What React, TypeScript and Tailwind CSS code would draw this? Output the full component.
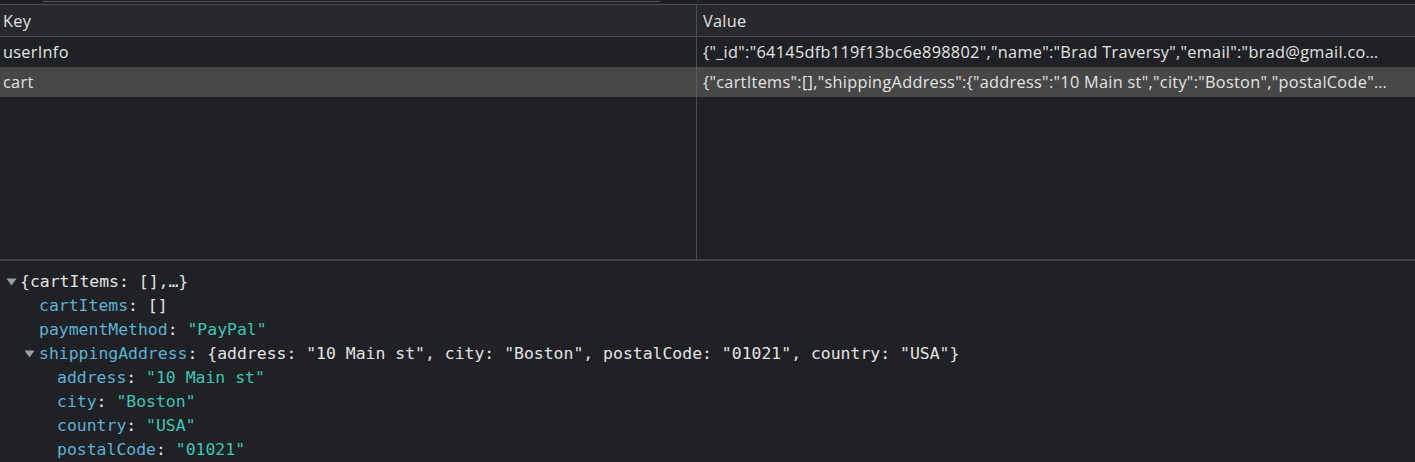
import React from "react";

const mono = { fontFamily: '"DejaVu Sans Mono", "Liberation Mono", monospace' };

function Tri() {
  return (
    <svg width="11" height="8" viewBox="0 0 11 8" className="shrink-0">
      <path d="M0.5 0.5 L10.5 0.5 L5.5 7.5 Z" fill="#9aa0a6" />
    </svg>
  );
}

function K({ children }: { children: React.ReactNode }) {
  return <span className="text-[#5db0d7]">{children}</span>;
}
function S({ children }: { children: React.ReactNode }) {
  return <span className="text-[#3cc5b5]">{children}</span>;
}

export default function App() {
  return (
    <div
      className="w-[1415px] h-[462px] overflow-hidden bg-[#202124] text-[#e3e3e3] flex flex-col"
      style={{ fontFamily: '"Open Sans", "Lato", sans-serif' }}
    >
      {/* top strip */}
      <div className="h-[5px] shrink-0 border-b border-[#494c50] flex">
        <div className="ml-[43px] w-[617px] h-[2px] border-b border-[#4a4d51]" />
      </div>
      {/* table */}
      <div className="h-[256px] shrink-0 flex flex-col border-b-2 border-[#3f4246] text-[16.3px] tracking-[0.3px]">
        <div className="h-[32px] shrink-0 flex bg-[#28292d] border-b border-[#494c50]">
          <div className="w-[697px] shrink-0 border-r border-[#494c50] pl-[3px] pt-[1px] flex items-center">Key</div>
          <div className="flex-1 pl-[6px] pt-[1px] flex items-center">Value</div>
        </div>
        <div className="h-[30px] shrink-0 flex">
          <div className="w-[697px] shrink-0 border-r border-[#494c50] pl-[3px] pt-[1px] flex items-center">userInfo</div>
          <div className="flex-1 pl-[6px] pt-[1px] flex items-center whitespace-nowrap overflow-hidden">
            {'{"_id":"64145dfb119f13bc6e898802","name":"Brad Traversy","email":"brad@gmail.co…'}
          </div>
        </div>
        <div className="h-[30px] shrink-0 flex bg-[#474747]">
          <div className="w-[697px] shrink-0 border-r border-[#5a5a5a] pl-[3px] pt-[1px] flex items-center">cart</div>
          <div className="flex-1 pl-[6px] pt-[1px] flex items-center whitespace-nowrap overflow-hidden">
            {'{"cartItems":[],"shippingAddress":{"address":"10 Main st","city":"Boston","postalCode"…'}
          </div>
        </div>
        <div className="flex-1 flex">
          <div className="w-[697px] shrink-0 border-r border-[#494c50]" />
          <div className="flex-1" />
        </div>
      </div>
      {/* tree */}
      <div className="flex-1 pt-[9px] text-[16.45px] leading-[24px] whitespace-pre border-b border-[#2e3a3c]" style={mono}>
        <div className="flex items-center pl-[6px]">
          <Tri />
          <span className="ml-[3px]">{"{cartItems: [],…}"}</span>
        </div>
        <div className="pl-[39px]">
          <K>cartItems</K>: []
        </div>
        <div className="pl-[39px]">
          <K>paymentMethod</K>: <S>"PayPal"</S>
        </div>
        <div className="flex items-center pl-[24px]">
          <Tri />
          <span className="ml-[4px]">
            <K>shippingAddress</K>: {'{address: "10 Main st", city: "Boston", postalCode: "01021", country: "USA"}'}
          </span>
        </div>
        <div className="pl-[57px]">
          <K>address</K>: <S>"10 Main st"</S>
        </div>
        <div className="pl-[57px]">
          <K>city</K>: <S>"Boston"</S>
        </div>
        <div className="pl-[57px]">
          <K>country</K>: <S>"USA"</S>
        </div>
        <div className="pl-[57px]">
          <K>postalCode</K>: <S>"01021"</S>
        </div>
      </div>
    </div>
  );
}
